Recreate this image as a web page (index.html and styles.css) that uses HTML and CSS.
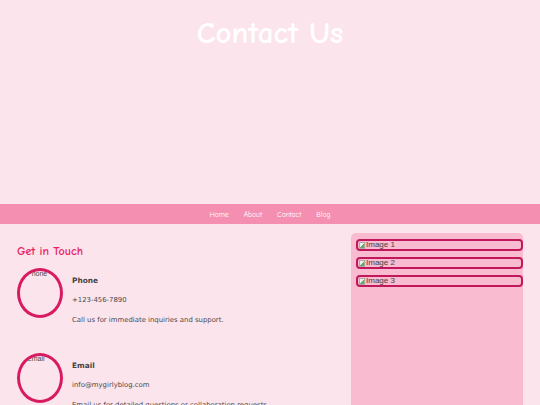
FILE: index.html
```html
<!DOCTYPE html>
<html lang="en">
<head>
<meta charset="utf-8">
<title>Contact Us</title>
<link rel="stylesheet" href="styles.css">
</head>
<body>
<header class="hero">
  <h1 class="hero-title">Contact Us</h1>
</header>
<nav class="nav">
  <a href="#">Home</a>
  <a href="#">About</a>
  <a href="#">Contact</a>
  <a href="#">Blog</a>
</nav>
<main class="main">
  <section class="content">
    <h2 class="section-title">Get in Touch</h2>
    <div class="contact-item">
      <div class="icon"><span class="alt">Phone</span></div>
      <div class="info">
        <h3 class="info-title">Phone</h3>
        <p class="info-line">+123-456-7890</p>
        <p class="info-line">Call us for immediate inquiries and support.</p>
      </div>
    </div>
    <div class="contact-item">
      <div class="icon"><span class="alt">Email</span></div>
      <div class="info">
        <h3 class="info-title">Email</h3>
        <p class="info-line">info@mygirlyblog.com</p>
        <p class="info-line">Email us for detailed questions or collaboration requests.</p>
      </div>
    </div>
  </section>
  <aside class="sidebar">
    <div class="thumb"><span class="broken"></span>Image 1</div>
    <div class="thumb"><span class="broken"></span>Image 2</div>
    <div class="thumb"><span class="broken"></span>Image 3</div>
  </aside>
</main>
</body>
</html>
```
FILE: styles.css
```css
* { box-sizing: border-box; }
html, body { margin: 0; padding: 0; }
body {
  background: #fce4ec;
  font-family: "DejaVu Sans", Verdana, sans-serif;
  color: #444;
  overflow: hidden;
  height: 405px;
}
.hero {
  height: 204px;
  text-align: center;
  padding-top: 15px;
}
.hero-title {
  margin: 0;
  font-family: "Comic Sans MS", "Comic Neue", cursive;
  font-size: 31px;
  line-height: 36px;
  font-weight: bold;
  color: #fff;
}
.nav {
  background: #f48fb1;
  height: 20px;
  display: flex;
  justify-content: center;
  align-items: center;
  gap: 15px;
}
.nav a {
  color: #fff;
  text-decoration: none;
  font-family: "Comic Sans MS", "Comic Neue", cursive;
  font-size: 7.5px;
}
.main {
  display: flex;
  padding: 0 17px;
  gap: 11px;
}
.content { flex: 1; }
.section-title {
  margin: 19px 0 9px;
  font-family: "Comic Sans MS", "Comic Neue", cursive;
  font-size: 12px;
  line-height: 16px;
  font-weight: bold;
  color: #e91e63;
}
.contact-item {
  display: flex;
  gap: 9px;
  margin-bottom: 18px;
}
.icon {
  width: 46px;
  height: 50px;
  border: 3px solid #d81b60;
  border-radius: 50%;
  overflow: hidden;
  flex-shrink: 0;
  position: relative;
}
.alt {
  position: absolute;
  left: 7px;
  top: -1px;
  font-family: "Liberation Sans", Arial, sans-serif;
  font-size: 7px;
  color: #444;
}
.info { padding-top: 8px; }
.info-title {
  margin: 0 0 9px;
  font-size: 7.4px;
  line-height: 10px;
  font-weight: bold;
  color: #444;
}
.info-line {
  margin: 0 0 10px;
  font-size: 6.9px;
  line-height: 10px;
  color: #4a4a4a;
}
.sidebar {
  width: 172px;
  margin-top: 9px;
  height: 200px;
  background: #f8bbd0;
  border-radius: 5px;
  padding: 6px 0 0 5px;
}
.thumb {
  height: 12px;
  border: 2px solid #c2185b;
  border-radius: 4px;
  margin-bottom: 6px;
  font-family: "Liberation Sans", Arial, sans-serif;
  font-size: 8px;
  line-height: 8px;
  color: #444;
  display: flex;
  align-items: center;
  background: #f8bbd0;
}
.broken {
  display: inline-block;
  width: 6px;
  height: 7px;
  border: 1px solid #aaa;
  background: linear-gradient(135deg, #eee 50%, #6a6 50%);
  margin: 0 1px 0 1px;
}
```
